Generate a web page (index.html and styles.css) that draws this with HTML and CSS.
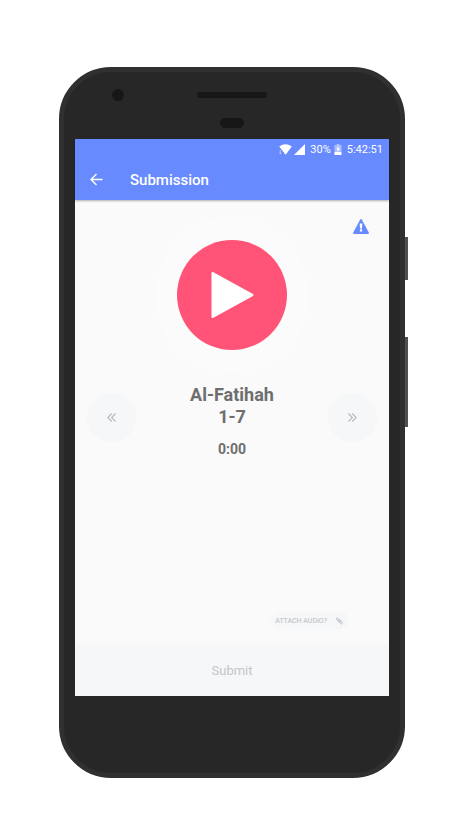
FILE: index.html
```html
<!DOCTYPE html>
<html lang="en">
<head>
<meta charset="utf-8">
<meta name="viewport" content="width=device-width, initial-scale=1">
<title>Submission</title>
<link rel="stylesheet" href="styles.css">
</head>
<body>
<div class="phone">
  <span class="side-key power"></span>
  <span class="side-key volume"></span>
  <span class="camera"></span>
  <span class="speaker"></span>
  <span class="sensor"></span>
  <div class="screen">
    <header class="top">
      <div class="status">
        <svg class="wifi" width="13" height="11" viewBox="0 0 13 11" aria-hidden="true"><path d="M.2 2.600Q6.500-2 12.800 2.600L6.600 10.700Z" fill="#fff"/><path d="M1.300 6v4M.5 9l.8 1 .8-1" fill="none" stroke="#fff" stroke-opacity=".6" stroke-width=".8"/></svg>
        <svg class="signal" width="11" height="11" viewBox="0 0 11 11" aria-hidden="true"><path d="M11 0v11H0Z" fill="#fff"/></svg>
        <span class="percent">30%</span>
        <svg class="battery" width="8" height="11" viewBox="0 0 8 11" aria-hidden="true"><path d="M2.500 0h3v1H7.500v7h-7V1h2Z" fill="#fff" fill-opacity=".45"/><path d="M.5 8h7v3h-7Z" fill="#fff"/><path d="M4.800 2 2.300 5.300h1.400L3.300 8.300 6 4.700H4.500Z" fill="#fff"/></svg>
        <span>5:42:51</span>
      </div>
      <div class="appbar">
        <button class="back" type="button" aria-label="Back"><svg width="13" height="13" viewBox="0 0 13 13"><path d="M12.500 6.500H1.200M6.500 1 1 6.500 6.500 12" fill="none" stroke="#fff" stroke-width="1.400"/></svg></button>
        <h1>Submission</h1>
      </div>
    </header>
    <main>
      <div class="stage">
        <div class="halo">
          <button class="play" type="button" aria-label="Play"><svg width="44" height="48" viewBox="0 0 44 48"><path d="M2.500 2v44l40-22Z" fill="#fff" stroke="#fff" stroke-width="2" stroke-linejoin="round"/></svg></button>
        </div>
        <button class="warning" type="button" aria-label="Report a problem"><svg width="16" height="15" viewBox="0 0 16 15"><path d="M8 1 15 14H1Z" fill="#678aff" stroke="#678aff" stroke-width="1.800" stroke-linejoin="round"/><path d="M6.700 4.500h2.600l-.3 4.900H7ZM6.900 10.300h2.200v2.200H6.900Z" fill="#fff"/></svg></button>
      </div>
      <div class="track">
        <button class="skip" type="button" aria-label="Previous"><svg width="9" height="9" viewBox="0 0 9 9"><path d="M4.700.5.900 4.500l3.800 4M8.500.5 4.700 4.500l3.800 4"/></svg></button>
        <div class="info">
          <h2>Al-Fatihah<br>1-7</h2>
          <p>0:00</p>
        </div>
        <button class="skip" type="button" aria-label="Next"><svg width="9" height="9" viewBox="0 0 9 9"><path d="M.5.5l3.800 4-3.800 4M4.300.5l3.800 4-3.800 4"/></svg></button>
      </div>
      <button class="attach" type="button">ATTACH AUDIO?<svg width="8" height="8" viewBox="0 0 8 8" aria-hidden="true"><path d="M5.300 6.300 1.600 2.600C.4 1.400 1.800.2 2.900 1.300L6.700 5.100C8 6.500 6.500 7.800 5.200 6.500M5.300 5.200 2.600 2.500M4 1.700l3 3" fill="none" stroke="#b9bbc2" stroke-width=".9"/></svg></button>
    </main>
    <button class="submit" type="button">Submit</button>
  </div>
</div>
</body>
</html>
```
FILE: styles.css
```css
* {
  box-sizing: border-box;
}

body {
  display: flex;
  min-height: 100vh;
  margin: 0;
  padding: 67px 59px 57px;
  background: #fff;
  font-family: Roboto, "Liberation Sans", sans-serif;
}

button {
  display: flex;
  align-items: center;
  justify-content: center;
  margin: 0;
  padding: 0;
  border: 0;
  background: none;
  font-family: inherit;
}

svg {
  display: block;
  flex: none;
}

h1, h2, p {
  margin: 0;
}

.phone {
  position: relative;
  display: flex;
  flex: 1;
  flex-direction: column;
  padding: 67px 11px 77px;
  border: 5px solid #303030;
  border-radius: 52px;
  background: #272727;
}

.side-key {
  position: absolute;
  left: calc(100% + 5px);
  width: 3px;
  background: #505050;
}

.power {
  top: 165px;
  height: 43px;
}

.volume {
  top: 265px;
  height: 90px;
}

.camera, .speaker, .sensor {
  position: absolute;
  background: #171717;
}

.camera {
  top: 17px;
  left: 48px;
  width: 12px;
  height: 12px;
  border-radius: 50%;
}

.speaker, .sensor {
  left: 50%;
  transform: translateX(-50%);
  border-radius: 5px;
}

.speaker {
  top: 20px;
  width: 70px;
  height: 6px;
}

.sensor {
  top: 46px;
  width: 24px;
  height: 10px;
}

.screen {
  display: flex;
  flex: 1;
  flex-direction: column;
  background: #fafafa;
}

.top {
  background: #678aff;
  box-shadow: 0 1px 2px rgba(0, 0, 0, 0.3);
  color: #fff;
}

.status {
  display: flex;
  align-items: center;
  justify-content: flex-end;
  height: 20px;
  padding-right: 6px;
  font-size: 11px;
}

.signal {
  margin: 0 5px 0 2px;
}

.battery {
  margin: 0 5px 0 3px;
}

.appbar {
  display: flex;
  align-items: center;
  gap: 27px;
  height: 41px;
  padding-left: 15px;
}

h1 {
  font-size: 15px;
  font-weight: 500;
}

main {
  display: flex;
  flex: 1;
  flex-direction: column;
  padding: 18px 12px 16px;
}

.stage {
  display: grid;
}

.halo {
  display: grid;
  grid-area: 1 / 1;
  place-self: center;
  place-items: center;
  width: 154px;
  height: 154px;
  border-radius: 50%;
  background: #fbfbfb;
}

.play {
  width: 110px;
  height: 110px;
  border-radius: 50%;
  background: #ff5377;
}

.warning {
  grid-area: 1 / 1;
  place-self: start end;
  padding: 1px 8px;
}

.track {
  display: flex;
  align-items: flex-start;
  justify-content: space-between;
  margin-top: 12px;
}

.skip {
  width: 49px;
  height: 49px;
  margin-top: 9px;
  border-radius: 50%;
  background: #f5f7f9;
}

.skip path {
  fill: none;
  stroke: #b9bbc2;
  stroke-width: 1.2;
}

.info {
  color: #6e6e6e;
  text-align: center;
}

h2 {
  font-size: 18px;
  font-weight: 700;
  line-height: 22px;
}

.info p {
  margin-top: 12px;
  font-size: 14px;
  font-weight: 700;
  line-height: 18px;
}

.attach {
  gap: 8px;
  align-self: flex-end;
  height: 17px;
  margin: auto 28px 0 0;
  padding: 0 6px 0 4px;
  border-radius: 9px;
  background: #f5f7f9;
  color: #b9bbc2;
  font-size: 7px;
}

.submit {
  height: 51px;
  background: #f5f7f9;
  color: #c3c5cb;
  font-size: 13px;
  font-weight: 400;
}
```
